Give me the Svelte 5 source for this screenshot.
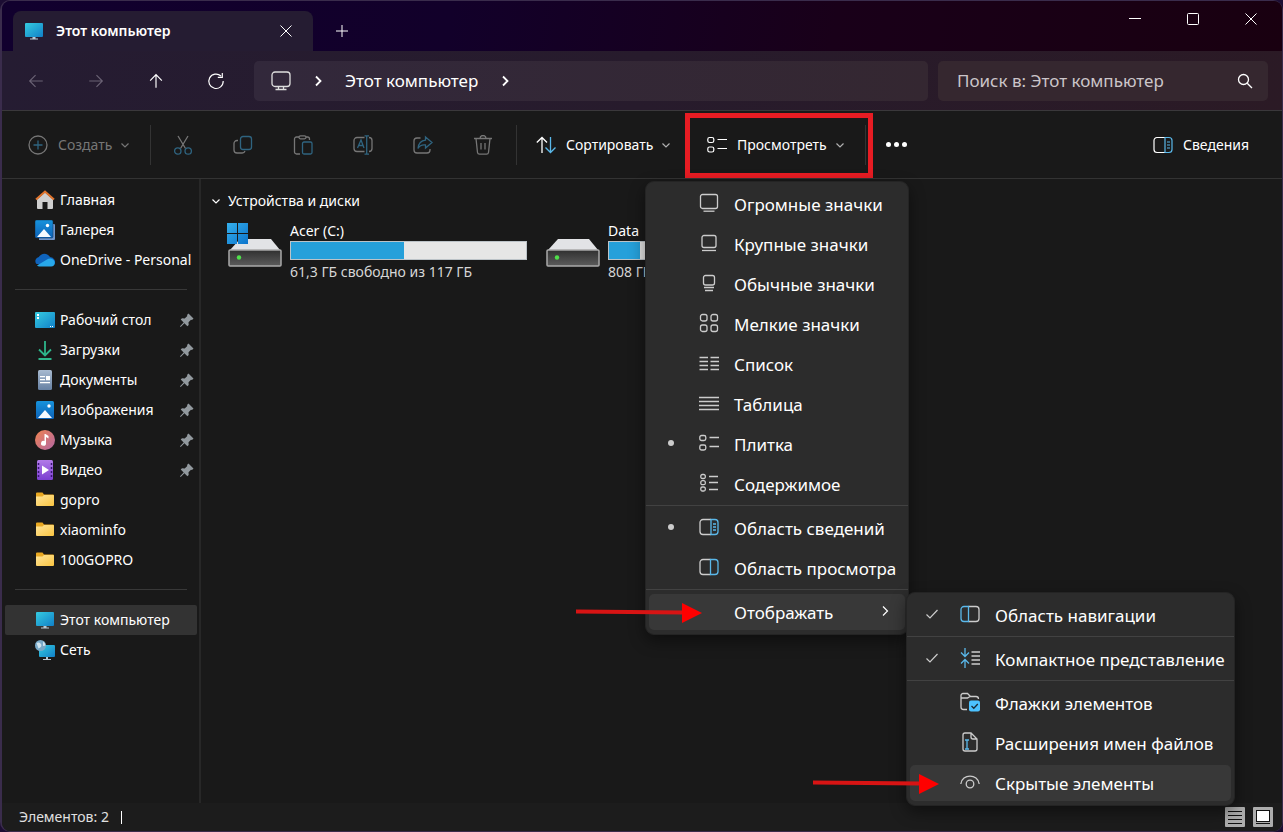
<script lang="ts">
	type SideItem = { label: string; icon: string; pinned?: boolean; current?: boolean };
	type MenuItem = { label: string; icon: string; mark?: 'dot' | 'check'; active?: boolean };

	const sideGroups: SideItem[][] = [
		[
			{ label: 'Главная', icon: 'home' },
			{ label: 'Галерея', icon: 'gallery' },
			{ label: 'OneDrive - Personal', icon: 'cloud' }
		],
		[
			{ label: 'Рабочий стол', icon: 'desktop', pinned: true },
			{ label: 'Загрузки', icon: 'downloads', pinned: true },
			{ label: 'Документы', icon: 'document', pinned: true },
			{ label: 'Изображения', icon: 'pictures', pinned: true },
			{ label: 'Музыка', icon: 'music', pinned: true },
			{ label: 'Видео', icon: 'video', pinned: true },
			{ label: 'gopro', icon: 'folder' },
			{ label: 'xiaominfo', icon: 'folder' },
			{ label: '100GOPRO', icon: 'folder' }
		],
		[
			{ label: 'Этот компьютер', icon: 'computer', current: true },
			{ label: 'Сеть', icon: 'network' }
		]
	];

	const fileActions = [
		{ label: 'Вырезать', icon: 'cut' },
		{ label: 'Копировать', icon: 'copy' },
		{ label: 'Вставить', icon: 'paste' },
		{ label: 'Переименовать', icon: 'rename' },
		{ label: 'Поделиться', icon: 'share' },
		{ label: 'Удалить', icon: 'trash' }
	];

	const viewGroups: MenuItem[][] = [
		[
			{ label: 'Огромные значки', icon: 'huge' },
			{ label: 'Крупные значки', icon: 'large' },
			{ label: 'Обычные значки', icon: 'medium' },
			{ label: 'Мелкие значки', icon: 'small' },
			{ label: 'Список', icon: 'list' },
			{ label: 'Таблица', icon: 'table' },
			{ label: 'Плитка', icon: 'tiles', mark: 'dot' },
			{ label: 'Содержимое', icon: 'content' }
		],
		[
			{ label: 'Область сведений', icon: 'details', mark: 'dot' },
			{ label: 'Область просмотра', icon: 'preview' }
		]
	];

	const showGroups: MenuItem[][] = [
		[{ label: 'Область навигации', icon: 'navpane', mark: 'check' }],
		[{ label: 'Компактное представление', icon: 'compact', mark: 'check' }],
		[
			{ label: 'Флажки элементов', icon: 'checkboxes' },
			{ label: 'Расширения имен файлов', icon: 'extensions' },
			{ label: 'Скрытые элементы', icon: 'hidden', active: true }
		]
	];

	const drives = [
		{ name: 'Acer (C:)', used: 48, info: '61,3 ГБ свободно из 117 ГБ', system: true },
		{ name: 'Data', used: 13, info: '808 ГБ', system: false }
	];
</script>

{#snippet icon(name: string)}
	<svg class="icon" viewBox="0 0 20 20" aria-hidden="true">
		{#if name === 'back'}
			<path d="M17.5 10H3M9.5 3.5 3 10l6.5 6.5" />
		{:else if name === 'forward'}
			<path d="M2.5 10H17M10.5 3.5 17 10l-6.5 6.5" />
		{:else if name === 'up'}
			<path d="M10 17.5V3M3.5 9.5 10 3l6.5 6.5" />
		{:else if name === 'refresh'}
			<path d="M15.5 4.500A8 8 0 1 0 18 10M17 1v5h-5" />
		{:else if name === 'screen'}
			<rect x="1" y="1" width="18" height="14.5" rx="3" />
			<path d="M7.5 15.5v3M12.5 15.5v3M4.500 18.500h11" />
		{:else if name === 'search'}
			<circle cx="8.5" cy="8.5" r="5" />
			<path d="m12.2 12.2 4.800 4.800" />
		{:else if name === 'create'}
			<circle cx="10" cy="10" r="9" />
			<path class="accent" d="M10 5.5v9M5.5 10h9" />
		{:else if name === 'cut'}
			<path d="M5 1l7.500 12.500M15 1 7.500 13.500" />
			<circle class="accent" cx="4.800" cy="16" r="3.200" />
			<circle class="accent" cx="15.200" cy="16" r="3.200" />
		{:else if name === 'copy'}
			<path d="M5 5.500H4a3 3 0 0 0-3 3V15a3 3 0 0 0 3 3h5a3 3 0 0 0 3-2" />
			<rect class="accent" x="7.500" y="1.500" width="11" height="13" rx="2.500" />
		{:else if name === 'paste'}
			<path d="M7 19H3.500A2 2 0 0 1 1.500 17V4a2 2 0 0 1 2-2H6m7 0h1.500a2 2 0 0 1 2 2v1" />
			<rect x="6" y=".8" width="7" height="3" rx="1.500" />
			<rect class="accent" x="9.500" y="7" width="9.500" height="12" rx="1.500" />
		{:else if name === 'rename'}
			<path d="M11.500 2.500H4a3 3 0 0 0-3 3v8a3 3 0 0 0 3 3h7.500M16 2.500a3 3 0 0 1 3 3v8a3 3 0 0 1-3 3" />
			<path class="accent" d="M4.500 13 8 5l3 8M5.500 10.500h5M13.700 1v18M11.500.8h4.500M11.500 19.200h4.500" />
		{:else if name === 'share'}
			<path d="M7.500 3H4a3 3 0 0 0-3 3v9a3 3 0 0 0 3 3h10a3 3 0 0 0 3-3v-1" />
			<path class="accent" d="M12.500 2 19 7.500 12.500 13V10C9 9.500 6.500 11 5 13.500 5.500 8.500 8 5.500 12.500 5.200z" />
		{:else if name === 'trash'}
			<path d="M1 3.500h18M7 3.500a3 3 0 0 1 6 0M3 3.500l1.500 14a2 2 0 0 0 2 1.700h7a2 2 0 0 0 2-1.700L17 3.500M8 8v6.500M12 8v6.500" />
		{:else if name === 'sort'}
			<path d="M6 18V2.500M.8 7.500 6 2.500 11 7.500" />
			<path class="accent" d="M14.500 2v15.500M9.500 12.500l5 5 5-5" />
		{:else if name === 'huge'}
			<rect x="1.500" y="1.500" width="17" height="14" rx="2" />
			<path d="M4.500 18.200h11" />
		{:else if name === 'large'}
			<rect x="3" y="2.500" width="14" height="12" rx="2" />
			<path d="M3 17.500h14" />
		{:else if name === 'medium'}
			<rect x="4.500" y="2.500" width="11" height="9.500" rx="2" />
			<path d="M5 14.500h10M6 17.500h8" />
		{:else if name === 'small'}
			<rect x="1.500" y="1.500" width="6.500" height="6.500" rx="2" />
			<rect x="12" y="1.500" width="6.500" height="6.500" rx="2" />
			<rect x="1.500" y="12" width="6.500" height="6.500" rx="2" />
			<rect x="12" y="12" width="6.500" height="6.500" rx="2" />
		{:else if name === 'list'}
			<path d="M.5 4.500H9M.5 8.500H9M.5 12.500H9M.5 16.500H9M11.500 4.500H20M11.500 8.500H20M11.500 12.500H20M11.500 16.500H20" />
		{:else if name === 'table'}
			<path d="M0 4.500h20M0 8.500h20M0 12.500h20M0 16.500h20" />
		{:else if name === 'tiles'}
			<rect x=".8" y="2.500" width="6" height="5" rx="1.800" />
			<rect x=".8" y="12" width="6" height="5" rx="1.800" />
			<path d="M10.500 4.500H20M10.500 13.500H20" />
		{:else if name === 'content'}
			<rect x="1.800" y="1.500" width="4.500" height="4" rx="1.500" />
			<rect x="1.800" y="7.700" width="4.500" height="4" rx="1.500" />
			<rect x="1.800" y="14" width="4.500" height="4" rx="1.500" />
			<path d="M10 3.500h9M10 9.500h9M10 16.500h9" />
		{:else if name === 'details'}
			<path d="M12 2.500H4a3 3 0 0 0-3 3v9a3 3 0 0 0 3 3h8" />
			<path class="accent" d="M12 2.500h4a3 3 0 0 1 3 3v9a3 3 0 0 1-3 3h-4zM14 7h3M14 10h3M14 13h3" />
		{:else if name === 'preview'}
			<path d="M11.500 2.500H4a3 3 0 0 0-3 3v9a3 3 0 0 0 3 3h7.500" />
			<path class="accent" d="M11.500 2.500H16a3 3 0 0 1 3 3v9a3 3 0 0 1-3 3h-4.500z" />
		{:else if name === 'navpane'}
			<path d="M8.500 2.500H16a3 3 0 0 1 3 3v9a3 3 0 0 1-3 3H8.500" />
			<path class="accent" d="M8.500 2.500H4a3 3 0 0 0-3 3v9a3 3 0 0 0 3 3h4.500z" />
		{:else if name === 'compact'}
			<path d="M11.500 4h8.500M11.500 8h8.500M11.500 12h8.500M11.500 16h8.500" />
			<path class="accent" d="M5 0v8M1 4.500l4 4 4-4M5 20v-8M1 15.500l4-4 4 4" />
		{:else if name === 'checkboxes'}
			<path d="M7 17.500H3.500a2.500 2.500 0 0 1-2.500-2.500V3.500a2 2 0 0 1 2-2h4.500l3 3H16a2.500 2.500 0 0 1 2.500 2.500M1 6h6.500l2.500-1.500" />
			<rect x="9" y="8.500" width="11" height="11" rx="2" fill="#4cc2ff" stroke="none" />
			<path d="m11.500 14 2.300 2.300 4-4.300" stroke="#1b2b36" />
		{:else if name === 'extensions'}
			<path d="M11 1H5a2 2 0 0 0-2 2v14a2 2 0 0 0 2 2h10a2 2 0 0 0 2-2V7zM11 1v4a2 2 0 0 0 2 2h4" />
			<path class="accent" d="M7 8.500v8M5 8h4M5 17h4" />
		{:else if name === 'hidden'}
			<path d="M.8 12C2 1.500 18 1.500 19.200 12" />
			<circle cx="10" cy="12" r="3.800" />
		{:else if name === 'computer'}
			<g stroke="none">
				<rect x="1" y="2" width="18" height="14" rx="1" fill="url(#screen)" />
				<path d="M8.500 16h3v1.500H14v1H6v-1h2.500z" fill="#b9c7d1" />
			</g>
		{:else if name === 'home'}
			<path d="M2 9.500 10 2.500l8 7V18a1 1 0 0 1-1 1h-4.500v-7h-5v7H3a1 1 0 0 1-1-1z" fill="#cfcfcf" stroke="none" />
			<path d="M1 9.500 10 1.500l9 8" stroke="#e0732c" stroke-width="2" />
		{:else if name === 'gallery'}
			<g stroke="none">
				<path d="M4 4h15a1 1 0 0 1 1 1v14a1 1 0 0 1-1 1H4z" fill="#6f95cb" />
				<rect width="18" height="18" rx="1.500" fill="url(#photo)" stroke="#16314f" stroke-width=".5" />
				<path d="m2 17 7-8 7 8z" fill="#f5faff" />
				<circle cx="12.500" cy="5.500" r="1.700" fill="#fff" />
			</g>
		{:else if name === 'cloud'}
			<g stroke="none">
				<path d="M1.500 14A4.200 4.200 0 0 1 3.800 7 6.500 6.500 0 0 1 15 7a5 5 0 0 1 4 8z" fill="#0f64bd" />
				<path d="M2 15.500 12 9.500a5 5 0 0 1 4-1c5 1 5 8 0 8H4.500q-1.500 0-2.500-1z" fill="#28a8ea" />
			</g>
		{:else if name === 'desktop'}
			<g stroke="none">
				<rect y="2" width="20" height="16" rx="1" fill="url(#screen)" />
				<path d="M2 4h2v2H2zM2 7h2v2H2zM15 16h1v1h-1zM17 16h1v1h-1z" fill="#fff" />
			</g>
		{:else if name === 'downloads'}
			<path d="M10 1v14M4 9.500l6 6 6-6M3.500 19h13" stroke="#2eb58a" stroke-width="1.800" />
		{:else if name === 'document'}
			<g stroke="none">
				<rect x="3" width="14" height="20" rx="1.500" fill="url(#paper)" />
				<path d="M5 6h5v1.200H5zM5 9h5v1.200H5zM5 12h10v1.200H5zM11 6h4v4.200h-4z" fill="#fff" />
			</g>
		{:else if name === 'pictures'}
			<g stroke="none">
				<rect x="1" y="1" width="18" height="18" rx="1.500" fill="url(#photo)" />
				<path d="m3 18 7-8 7 8z" fill="#f5faff" />
				<circle cx="14" cy="6" r="1.700" fill="#fff" />
			</g>
		{:else if name === 'music'}
			<g stroke="none">
				<circle cx="10" cy="10" r="10" fill="url(#disc)" />
				<path d="M9.500 4h1l3 2v2.500l-2.500-1.500V13a2.500 2.500 0 1 1-1.500-2z" fill="#fff" />
			</g>
		{:else if name === 'video'}
			<g stroke="none">
				<rect x="2" width="16" height="20" rx="1.500" fill="url(#film)" />
				<path d="M7 5.500v9l7-4.500z" fill="#fff" />
				<path d="M3.500 3v15M16.500 3v15" stroke="#3a1573" stroke-width="1.500" stroke-dasharray="2 2" />
			</g>
		{:else if name === 'folder'}
			<g stroke="none">
				<path d="M1 3.500a1 1 0 0 1 1-1h5.500l1.500 2h9a1 1 0 0 1 1 1V8H1z" fill="#e9a821" />
				<path d="M1 6.500h6.500l1.500-1.500h9a1 1 0 0 1 1 1V15a1 1 0 0 1-1 1H2a1 1 0 0 1-1-1z" fill="url(#manila)" />
			</g>
		{:else if name === 'network'}
			<g stroke="none">
				<rect x="4" y="5" width="16" height="12" rx="1" fill="url(#screen)" />
				<path d="M11 17h2v2h3v1H8v-1h3z" fill="#b9c7d1" />
				<circle cx="5.500" cy="5.500" r="5.500" fill="#78a9c8" />
				<path d="M1.500 3q3-1.500 4.500 1T3.500 8.500zM8 1.500q2.500 1.500 2.500 4L8 6z" fill="#cfe3ee" />
			</g>
		{/if}
	</svg>
{/snippet}

{#snippet chevron(dir: 'down' | 'right')}
	<svg class="chevron" viewBox="0 0 12 12" aria-hidden="true">
		<path d={dir === 'down' ? 'M2.5 4.5 6 8l3.5-3.5' : 'M4 1.5 8.5 6 4 10.5'} />
	</svg>
{/snippet}

{#snippet arrow()}
	<svg class="arrow" viewBox="0 0 126 20" aria-hidden="true">
		<path d="M0 8.500l107 1" stroke="#d81414" stroke-width="4" />
		<path d="M106 0v20l20-10z" fill="#f00" stroke="none" />
	</svg>
{/snippet}

{#snippet menuRow(item: MenuItem)}
	<li role="none" class="menu-row">
		<button
			class="menu-item"
			class:active={item.active}
			role={item.mark === 'check' ? 'menuitemcheckbox' : 'menuitemradio'}
			aria-checked={!!item.mark}
		>
			<span class="mark">
				{#if item.mark === 'dot'}
					<span class="dot"></span>
				{:else if item.mark === 'check'}
					<svg class="chevron" viewBox="0 0 12 12" aria-hidden="true"><path d="M.5 6.500 4 10l7.500-8" /></svg>
				{/if}
			</span>
			{@render icon(item.icon)}
			<span>{item.label}</span>
		</button>
		{#if item.active}
			{@render arrow()}
		{/if}
	</li>
{/snippet}

<svg class="defs" aria-hidden="true">
	<defs>
		<linearGradient id="screen" x2="1" y2="1">
			<stop stop-color="#35cbe0" />
			<stop offset="1" stop-color="#1180c8" />
		</linearGradient>
		<linearGradient id="photo" x2="0" y2="1">
			<stop stop-color="#1793dc" />
			<stop offset="1" stop-color="#0d62b8" />
		</linearGradient>
		<linearGradient id="paper" x2="0" y2="1">
			<stop stop-color="#a8bad0" />
			<stop offset="1" stop-color="#6781a3" />
		</linearGradient>
		<linearGradient id="disc" x2="1" y2="1">
			<stop stop-color="#f08350" />
			<stop offset="1" stop-color="#b266a4" />
		</linearGradient>
		<linearGradient id="film" x2="0" y2="1">
			<stop stop-color="#b27be8" />
			<stop offset="1" stop-color="#7b3fd0" />
		</linearGradient>
		<linearGradient id="manila" x2="1" y2="1">
			<stop stop-color="#ffe59b" />
			<stop offset="1" stop-color="#f9c440" />
		</linearGradient>
		<linearGradient id="case" x2="0" y2="1">
			<stop stop-color="#303030" />
			<stop offset="1" stop-color="#5c5c5c" />
		</linearGradient>
		<linearGradient id="pane" x2="1" y2="1">
			<stop stop-color="#35b0ec" />
			<stop offset="1" stop-color="#0c74cc" />
		</linearGradient>
	</defs>
</svg>

<div class="window">
	<header class="titlebar">
		<div class="tab">
			{@render icon('computer')}
			<span class="tab-title">Этот компьютер</span>
			<button class="plain" aria-label="Закрыть вкладку">
				<svg class="glyph" viewBox="0 0 12 12"><path d="m.5.5 11 11M11.5.5l-11 11" /></svg>
			</button>
		</div>
		<button class="plain new-tab" aria-label="Новая вкладка">
			<svg class="glyph" viewBox="0 0 12 12"><path d="M6 0v12M0 6h12" /></svg>
		</button>
		<div class="controls">
			<button class="plain" aria-label="Свернуть">
				<svg class="glyph" viewBox="0 0 12 12"><path d="M0 5.5h12" /></svg>
			</button>
			<button class="plain" aria-label="Развернуть">
				<svg class="glyph" viewBox="0 0 12 12"><rect x=".5" y=".5" width="11" height="11" rx="1" /></svg>
			</button>
			<button class="plain" aria-label="Закрыть">
				<svg class="glyph" viewBox="0 0 12 12"><path d="m.5.5 11 11M11.5.5l-11 11" /></svg>
			</button>
		</div>
	</header>

	<div class="navbar">
		<div class="history">
			<button class="plain" aria-label="Назад" disabled>{@render icon('back')}</button>
			<button class="plain" aria-label="Вперед" disabled>{@render icon('forward')}</button>
			<button class="plain" aria-label="Вверх">{@render icon('up')}</button>
			<button class="plain" aria-label="Обновить">{@render icon('refresh')}</button>
		</div>
		<nav class="address" aria-label="Адрес">
			{@render icon('screen')}
			{@render chevron('right')}
			<a href="#computer">Этот компьютер</a>
			{@render chevron('right')}
		</nav>
		<div class="search">
			<input type="text" placeholder="Поиск в: Этот компьютер" aria-label="Поиск" />
			{@render icon('search')}
		</div>
	</div>

	<div class="toolbar">
		<button class="tool create" disabled>
			{@render icon('create')}
			<span>Создать</span>
			{@render chevron('down')}
		</button>
		<span class="divider"></span>
		<div class="actions">
			{#each fileActions as action}
				<button class="tool" aria-label={action.label} disabled>{@render icon(action.icon)}</button>
			{/each}
		</div>
		<span class="divider"></span>
		<button class="tool sort">
			{@render icon('sort')}
			<span>Сортировать</span>
			{@render chevron('down')}
		</button>
		<div class="view">
			<button class="tool" aria-haspopup="menu" aria-expanded="true">
				{@render icon('tiles')}
				<span>Просмотреть</span>
				{@render chevron('down')}
			</button>
			<span class="divider"></span>

			<ul class="menu" role="menu">
				{#each viewGroups as group}
					{#each group as item}
						{@render menuRow(item)}
					{/each}
					<li class="menu-line" role="separator"></li>
				{/each}
				<li role="none" class="menu-row">
					<button class="menu-item active" role="menuitem" aria-haspopup="menu" aria-expanded="true">
						<span class="mark"></span>
						<span class="icon"></span>
						<span>Отображать</span>
						{@render chevron('right')}
					</button>
					{@render arrow()}
					<ul class="menu submenu" role="menu">
						{#each showGroups as group, i}
							{#if i > 0}
								<li class="menu-line" role="separator"></li>
							{/if}
							{#each group as item}
								{@render menuRow(item)}
							{/each}
						{/each}
					</ul>
				</li>
			</ul>
		</div>
		<button class="tool more" aria-label="Дополнительно">
			<span class="dot"></span><span class="dot"></span><span class="dot"></span>
		</button>
		<button class="tool info">
			{@render icon('details')}
			<span>Сведения</span>
		</button>
	</div>

	<div class="body">
		<nav class="sidebar" aria-label="Область навигации">
			{#each sideGroups as group}
				<ul>
					{#each group as item}
						<li>
							<a href="#{item.icon}" class:current={item.current}>
								{@render icon(item.icon)}
								<span>{item.label}</span>
								{#if item.pinned}
									<svg class="pin" viewBox="0 0 14 14" aria-hidden="true">
										<path d="M8.500.500 13.500 5.500 12 7l-1-.3-2.500 2.600.2 2.700-1.300 1.300-3-3L.7 14 0 13.300 3.700 9.600l-3-3L2 5.300l2.700.2L7.300 3 7 2z" />
									</svg>
								{/if}
							</a>
						</li>
					{/each}
				</ul>
			{/each}
		</nav>

		<main>
			<h2>
				{@render chevron('down')}
				Устройства и диски
			</h2>
			<div class="drives">
				{#each drives as drive}
					<div class="drive">
						<svg class="disk" viewBox="0 0 56 46" aria-hidden="true">
							<path d="M3 27 13 16h31l9 11z" fill="#e2e3e6" />
							<rect x="2" y="27" width="52" height="16" rx="1" fill="url(#case)" stroke="#a9a9a9" stroke-width="1.500" />
							<circle cx="12" cy="34.500" r="2.200" fill="#4fe04a" />
							{#if drive.system}
								<path d="M0 0h10v10H0zM11 0h10v10H11zM0 11h10v10H0zM11 11h10v10H11z" fill="url(#pane)" />
							{/if}
						</svg>
						<div class="drive-text">
							<span>{drive.name}</span>
							<div class="bar" role="meter" aria-label={drive.name} aria-valuenow={drive.used}>
								<div class="fill" style:width="{drive.used}%"></div>
							</div>
							<span class="free">{drive.info}</span>
						</div>
					</div>
				{/each}
			</div>
		</main>
	</div>

	<footer class="status">
		<span class="count">Элементов: 2</span>
		<button class="plain" aria-label="Таблица">
			<svg class="layout" viewBox="0 0 20 20">
				<rect width="20" height="20" rx="1" fill="#adadad" stroke="none" />
				<path d="M3 4.500h14M3 8.500h14M3 12.500h14M3 16.500h14" stroke="#111" />
			</svg>
		</button>
		<button class="plain" aria-label="Крупные значки">
			<svg class="layout" viewBox="0 0 20 20">
				<rect width="20" height="20" rx="1" fill="#adadad" stroke="none" />
				<rect x="3.500" y="3.500" width="13" height="11" fill="#fff" stroke="#111" />
				<path d="M3 16.500h14" stroke="#111" />
			</svg>
		</button>
	</footer>
</div>

<style>
	:global(body) {
		background: #1c0d33;
	}

	.window {
		display: flex;
		flex-direction: column;
		box-sizing: border-box;
		min-height: 100vh;
		border: 1px solid #3a2c4c;
		border-left-width: 2px;
		border-radius: 10px;
		background: #191919;
		color: #fff;
		font-family: 'Noto Sans', 'Open Sans', sans-serif;
		font-size: 14px;
		line-height: 20px;
	}

	button,
	input {
		padding: 0;
		border: 0;
		background: none;
		color: inherit;
		font: inherit;
	}

	a {
		color: inherit;
		text-decoration: none;
	}

	ul {
		margin: 0;
		padding: 0;
		list-style: none;
	}

	svg {
		display: block;
		flex: none;
		fill: none;
		stroke: currentColor;
	}

	.defs {
		position: absolute;
		width: 0;
		height: 0;
	}

	.icon {
		flex: none;
		width: 20px;
		height: 20px;
		stroke-width: 1.3;
	}

	.accent {
		stroke: #5ab8ea;
	}

	.chevron {
		width: 12px;
		height: 12px;
		stroke-width: 1.2;
	}

	.glyph {
		width: 12px;
		height: 12px;
	}

	.plain {
		display: grid;
		place-items: center;
	}

	.dot {
		width: 6px;
		height: 6px;
		border-radius: 50%;
		background: currentColor;
	}

	.divider {
		flex: none;
		width: 1px;
		height: 40px;
		background: #333;
	}

	.titlebar {
		display: flex;
		height: 50px;
		border-radius: 8px 8px 0 0;
		background: linear-gradient(100deg, #11002e 0%, #12002a 35%, #190019 65%, #190010 100%);
	}

	.tab {
		display: flex;
		align-items: center;
		gap: 12px;
		box-sizing: border-box;
		width: 300px;
		height: 40px;
		margin: 10px 0 0 11px;
		padding: 0 21px 0 11px;
		border-radius: 8px 8px 0 0;
		background: #251c32;
	}

	.tab-title {
		flex: 1;
		font-weight: 600;
	}

	.new-tab {
		width: 58px;
		padding-top: 10px;
	}

	.controls {
		display: flex;
		height: 36px;
		margin-left: auto;
		padding-right: 2px;
	}

	.controls button {
		width: 58px;
	}

	.navbar {
		display: flex;
		align-items: center;
		gap: 10px;
		height: 59px;
		padding-right: 14px;
		background: linear-gradient(100deg, #251c32 0%, #271b2c 50%, #2b1a25 100%);
		font-size: 17px;
	}

	.history {
		display: flex;
		padding-left: 4px;
	}

	.history button {
		width: 60px;
		height: 40px;
	}

	.history button:disabled {
		color: #6a6274;
	}

	.history .icon {
		width: 18px;
		height: 18px;
	}

	.address {
		display: flex;
		flex: 1;
		align-items: center;
		gap: 21px;
		height: 40px;
		margin-left: -2px;
		padding-left: 17px;
		border-radius: 5px;
		background: linear-gradient(90deg, #32283b, #342731);
	}

	.address .icon {
		color: #ddd;
	}

	.address .chevron {
		stroke-width: 1.8;
	}

	.search {
		display: flex;
		align-items: center;
		box-sizing: border-box;
		width: 330px;
		height: 40px;
		padding: 0 13px 0 19px;
		border-radius: 5px;
		background: #35272f;
	}

	.search input {
		flex: 1;
		min-width: 0;
		outline: 0;
	}

	.search input::placeholder {
		color: #cbc5c9;
		opacity: 1;
	}

	.toolbar {
		display: flex;
		align-items: center;
		height: 67px;
		border-top: 1px solid #3a383b;
		border-bottom: 1px solid #333;
	}

	.tool {
		display: flex;
		align-items: center;
		gap: 10px;
		height: 40px;
	}

	.tool:disabled {
		color: #767676;
	}

	.tool:disabled .accent {
		stroke: #2f6480;
	}

	.tool .chevron {
		margin-left: -3px;
		color: #b0b0b0;
	}

	.tool:disabled .chevron {
		color: #767676;
	}

	.create {
		width: 148px;
		padding-left: 26px;
	}

	.actions {
		display: flex;
		padding: 0 3px 0 2px;
	}

	.actions .tool {
		justify-content: center;
		width: 60px;
	}

	.sort {
		width: 168px;
		padding-left: 19px;
	}

	/* frame around the open "View" button */
	.view {
		position: relative;
		display: flex;
		align-items: center;
		gap: 12px;
		box-sizing: border-box;
		width: 188px;
		height: 67px;
		padding-left: 22px;
	}

	.view::after {
		position: absolute;
		inset: 2px 0 0;
		border: 5px solid #e71c23;
		content: '';
		pointer-events: none;
	}

	.view > .tool {
		width: 146px;
	}

	.view > .tool .icon,
	.info .icon {
		stroke-width: 1.2;
	}

	.more {
		gap: 3px;
		padding: 0 13px;
	}

	.more .dot {
		width: 5px;
		height: 5px;
	}

	.info {
		margin-left: auto;
		padding-right: 33px;
	}

	.menu {
		position: absolute;
		top: calc(100% + 3px);
		left: -40px;
		z-index: 2;
		box-sizing: border-box;
		min-width: 264px;
		padding: 2px 0;
		border: 1px solid #242424;
		border-radius: 9px;
		background: #2c2c2c;
		box-shadow: 0 6px 16px rgb(0 0 0 / 45%);
		color: #fff;
		font-size: 17px;
	}

	.submenu {
		top: 0;
		left: calc(100% - 2px);
		min-width: 329px;
	}

	.menu-row {
		position: relative;
		padding: 2px 3px;
	}

	.menu-item {
		display: flex;
		align-items: center;
		box-sizing: border-box;
		width: 100%;
		height: 36px;
		padding-top: 2px;
		border-radius: 5px;
		white-space: nowrap;
	}

	.menu-item.active {
		background: #383838;
	}

	.menu-item .icon {
		margin: 0 15px 4px 22px;
		color: #ccc;
	}

	.menu-item > .chevron {
		margin: 0 14px 4px auto;
	}

	.mark {
		display: flex;
		justify-content: center;
		width: 12px;
		margin: 0 0 4px 16px;
		color: #ccc;
	}

	.menu-line {
		height: 1px;
		margin: 1px 0 2px;
		background: #424242;
	}

	.arrow {
		position: absolute;
		top: 11px;
		right: calc(100% - 56px);
		width: 126px;
		height: 20px;
		pointer-events: none;
	}

	.submenu .arrow {
		right: calc(100% - 32px);
	}

	.body {
		display: flex;
		flex: 1;
	}

	.sidebar {
		box-sizing: border-box;
		width: 199px;
		padding: 6px 2px 0 3px;
		border-right: 2px solid #272727;
	}

	.sidebar ul + ul::before {
		display: block;
		height: 1px;
		margin: 14px 10px 15px;
		background: #383838;
		content: '';
	}

	.sidebar a {
		display: flex;
		align-items: center;
		gap: 5px;
		height: 30px;
		padding: 0 3px 0 30px;
		border-radius: 2px;
		white-space: nowrap;
	}

	.sidebar a.current {
		background: #333;
	}

	.pin {
		width: 14px;
		height: 14px;
		margin-left: auto;
		fill: #92999e;
		stroke: none;
	}

	main {
		flex: 1;
		min-width: 0;
		padding: 12px 0 0 9px;
	}

	h2 {
		display: flex;
		align-items: center;
		gap: 6px;
		margin: 0 0 10px;
		font-size: 14px;
		font-weight: 400;
	}

	.drives {
		display: flex;
		flex-wrap: wrap;
		gap: 18px;
		padding-left: 17px;
	}

	.drive {
		display: flex;
		gap: 7px;
		width: 300px;
	}

	.disk {
		width: 56px;
		height: 46px;
		margin-top: 2px;
		stroke: none;
	}

	.drive-text {
		flex: 1;
	}

	.bar {
		box-sizing: border-box;
		height: 19px;
		margin-bottom: 2px;
		border: 1px solid #bcc3c8;
		background: #e6e6e6;
	}

	.fill {
		height: 100%;
		background: #26a0da;
	}

	.free {
		color: #d6d6d6;
	}

	.status {
		display: flex;
		align-items: center;
		gap: 8px;
		height: 28px;
		padding: 0 9px 0 17px;
		border-radius: 0 0 8px 8px;
		background: #1c1c1c;
		color: #e0e0e0;
	}

	.count {
		display: flex;
		align-items: center;
		gap: 12px;
		margin-right: auto;
	}

	.count::after {
		width: 1px;
		height: 13px;
		background: #fff;
		content: '';
	}

	.layout {
		width: 20px;
		height: 20px;
	}
</style>
